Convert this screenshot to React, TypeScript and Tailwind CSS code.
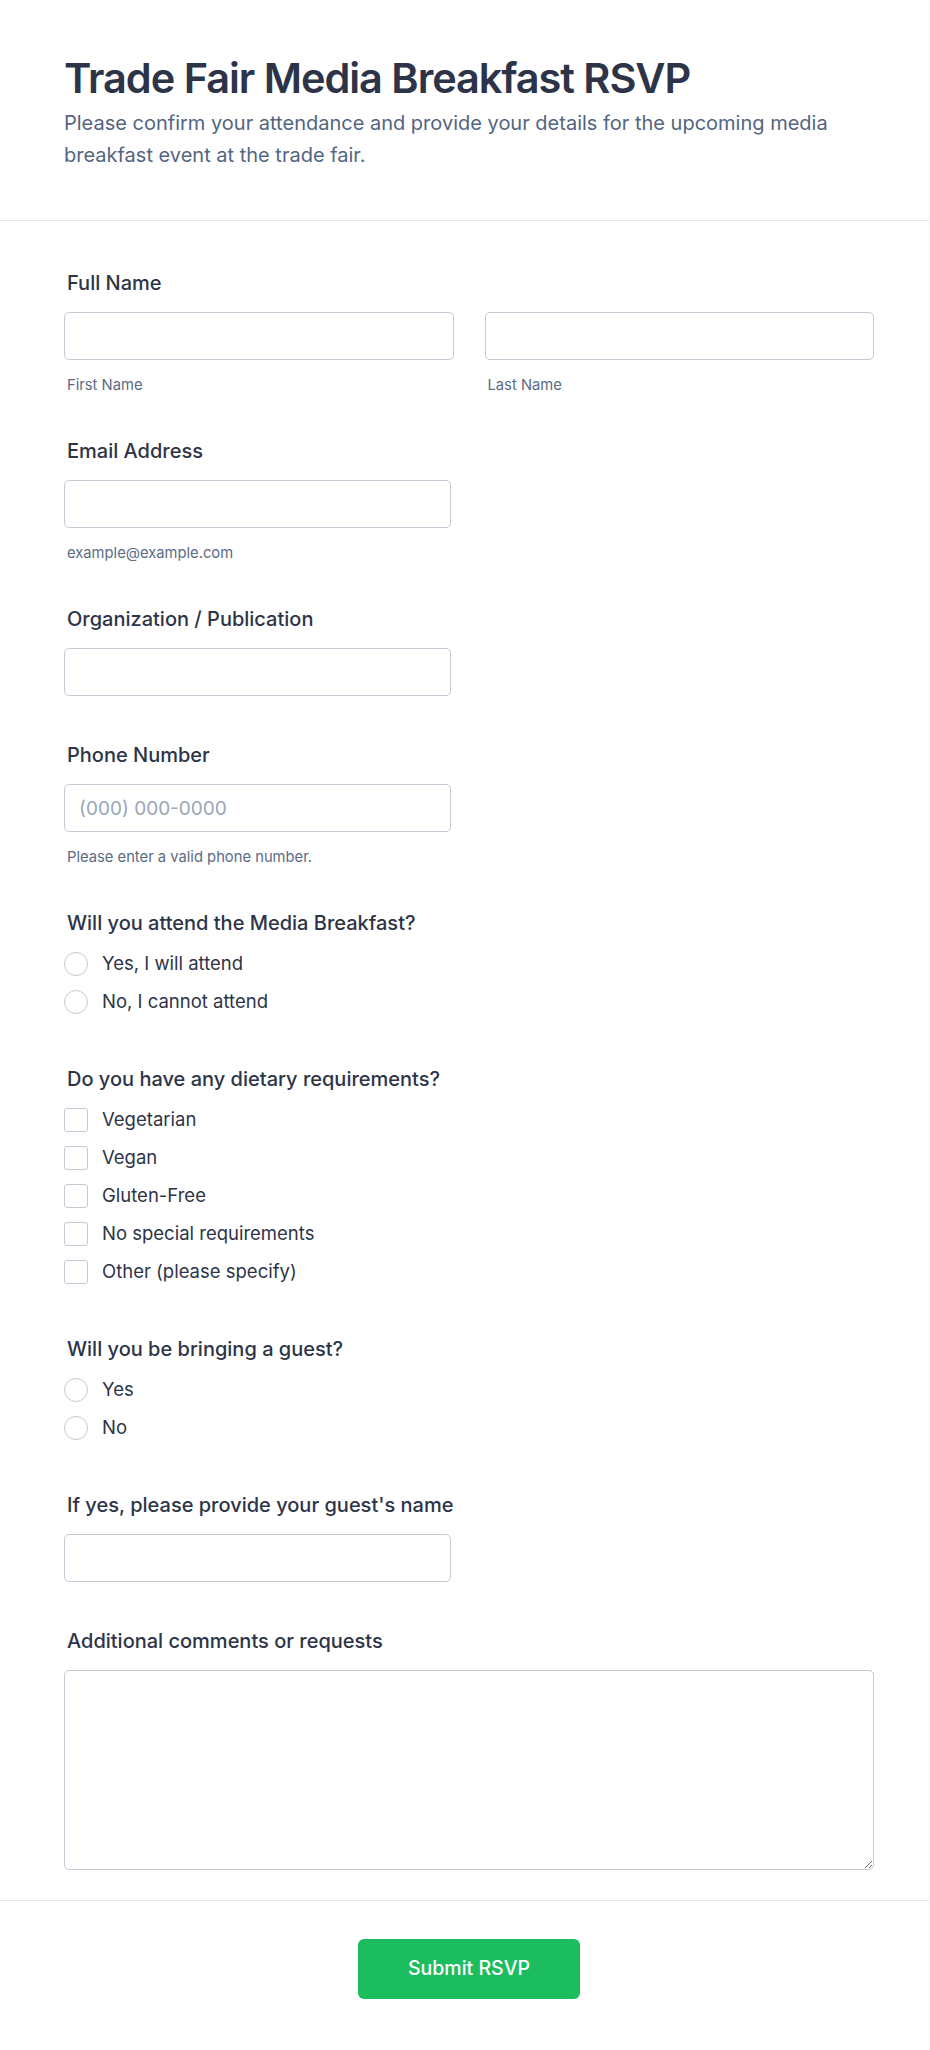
import { ReactNode } from 'react'

const font = { fontFamily: 'Inter, "Noto Sans", sans-serif' }

function FieldLabel({ children }: { children: ReactNode }) {
  return <label className="block text-xl leading-7 font-medium text-[#2d3447] mb-[15px] pl-[3px]">{children}</label>
}

function Hint({ children }: { children: ReactNode }) {
  return <p className="mt-[15px] -mb-[3px] pl-[3px] text-[14.75px] leading-5 text-[#5b6b84]">{children}</p>
}

function TextInput({ placeholder }: { placeholder?: string }) {
  return (
    <input
      type="text"
      placeholder={placeholder}
      className="h-12 w-full rounded-[5px] border border-[#c4c9d5] bg-white px-[14px] text-[19px] text-[#2d3447] placeholder:text-[#9aa6b6] outline-none"
    />
  )
}

function RadioGroup({ name, options }: { name: string; options: string[] }) {
  return (
    <div className="flex flex-col gap-[14px] mt-[1px] pb-[6px]">
      {options.map((opt) => (
        <label key={opt} className="flex items-center gap-[14px] h-6">
          <span className="w-6 h-6 rounded-full border border-[#c4c9d5] bg-white shrink-0" />
          <span className="text-[18.5px] text-[#2d3447]">{opt}</span>
          <input type="radio" name={name} className="hidden" />
        </label>
      ))}
    </div>
  )
}

function CheckboxGroup({ options }: { options: string[] }) {
  return (
    <div className="flex flex-col gap-[14px] mt-[1px] pb-[6px]">
      {options.map((opt) => (
        <label key={opt} className="flex items-center gap-[14px] h-6">
          <span className="w-6 h-6 rounded-[3px] border border-[#c4c9d5] bg-white shrink-0" />
          <span className="text-[18.5px] text-[#2d3447]">{opt}</span>
        </label>
      ))}
    </div>
  )
}

export default function App() {
  return (
    <div className="min-h-screen bg-[#f5f6f9]" style={font}>
      <div className="w-[929px] bg-white min-h-[2050px]">
        <header className="pl-16 pr-[55px] pt-[54px] pb-[49px] border-b border-[#e3e6ee]">
          <h1 className="text-[41.5px] leading-[48px] font-semibold tracking-tight text-[#2d3447]">
            Trade Fair Media Breakfast RSVP
          </h1>
          <p className="mt-[5px] text-xl leading-8 text-[#536580]">
            Please confirm your attendance and provide your details for the upcoming media breakfast event at the
            trade fair.
          </p>
        </header>

        <form className="pl-16 pr-[55px] pt-12 pb-[30px] flex flex-col gap-[45px]">
          <div>
            <FieldLabel>Full Name</FieldLabel>
            <div className="grid grid-cols-2 gap-[31px]">
              <div>
                <TextInput />
                <Hint>First Name</Hint>
              </div>
              <div>
                <TextInput />
                <Hint>Last Name</Hint>
              </div>
            </div>
          </div>

          <div>
            <FieldLabel>Email Address</FieldLabel>
            <div className="w-[387px]">
              <TextInput />
            </div>
            <Hint>example@example.com</Hint>
          </div>

          <div>
            <FieldLabel>Organization / Publication</FieldLabel>
            <div className="w-[387px]">
              <TextInput />
            </div>
          </div>

          <div>
            <FieldLabel>Phone Number</FieldLabel>
            <div className="w-[387px]">
              <TextInput placeholder="(000) 000-0000" />
            </div>
            <Hint>Please enter a valid phone number.</Hint>
          </div>

          <div>
            <FieldLabel>Will you attend the Media Breakfast?</FieldLabel>
            <RadioGroup name="attend" options={['Yes, I will attend', 'No, I cannot attend']} />
          </div>

          <div>
            <FieldLabel>Do you have any dietary requirements?</FieldLabel>
            <CheckboxGroup
              options={['Vegetarian', 'Vegan', 'Gluten-Free', 'No special requirements', 'Other (please specify)']}
            />
          </div>

          <div>
            <FieldLabel>Will you be bringing a guest?</FieldLabel>
            <RadioGroup name="guest" options={['Yes', 'No']} />
          </div>

          <div>
            <FieldLabel>If yes, please provide your guest's name</FieldLabel>
            <div className="w-[387px]">
              <TextInput />
            </div>
          </div>

          <div>
            <FieldLabel>Additional comments or requests</FieldLabel>
            <textarea className="block h-[200px] w-full rounded-[5px] border border-[#c4c9d5] bg-white px-[14px] py-3 text-lg outline-none" />
          </div>
        </form>

        <footer className="border-t border-[#e3e6ee] flex justify-center pl-16 pr-[55px] pt-[38px] pb-12">
          <button
            type="button"
            className="h-[60px] w-[222px] rounded-md bg-[#1bbd5e] text-white text-[19.5px] font-medium"
          >
            Submit RSVP
          </button>
        </footer>
      </div>
    </div>
  )
}
